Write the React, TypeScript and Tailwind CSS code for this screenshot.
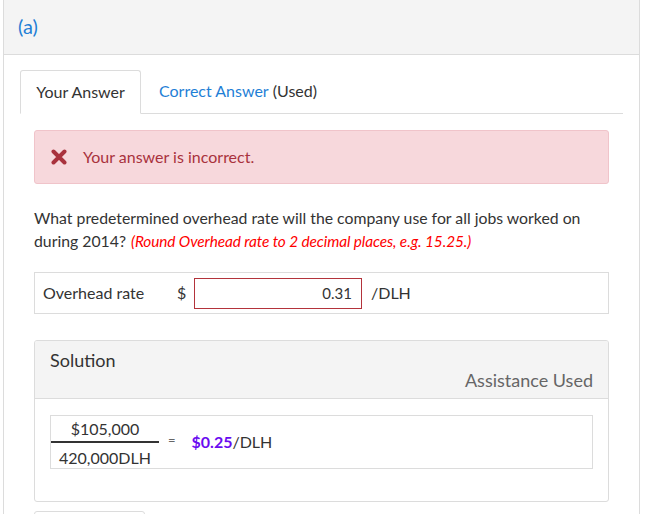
import React from "react";

export default function App() {
  return (
    <div
      className="w-[650px] h-[514px] overflow-hidden bg-white text-[#333]"
      style={{ fontFamily: "Lato, 'Open Sans', sans-serif" }}
    >
      <div className="ml-[3px] w-[637px] h-[514px] border-x border-[#dcdcdc]">
        {/* header */}
        <div className="h-[55px] bg-[#f4f4f4] border-b border-[#dcdcdc] pl-[14px] pt-[11px]">
          <span className="text-[20px] text-[#1f7fd6]">(a)</span>
        </div>

        <div className="px-[16px] pt-[15px]">
          {/* tabs */}
          <div className="flex items-end border-b border-[#dcdcdc] h-[44px]">
            <div className="h-[44px] w-[121px] -mb-px border border-[#dcdcdc] border-b-white rounded-t-[3px] bg-white flex items-center justify-center text-[16px] text-[#333]">
              Your Answer
            </div>
            <div className="h-[44px] flex items-center pl-[18px] text-[16px]">
              <span className="text-[#1f7fd6]">Correct Answer</span>
              <span className="text-[#333]">&nbsp;(Used)</span>
            </div>
          </div>

          <div className="px-[14px]">
            {/* alert */}
            <div className="mt-[16px] h-[54px] bg-[#f7d8dc] border border-[#f0c4ca] rounded-[3px] flex items-center pl-[16px]">
              <svg width="16" height="16" viewBox="0 0 16 16" className="mr-[16px]">
                <path
                  d="M2.5 2.5 L13.5 13.5 M13.5 2.5 L2.5 13.5"
                  stroke="#a9323d"
                  strokeWidth="4"
                  strokeLinecap="round"
                />
              </svg>
              <span className="text-[16px] text-[#a9323d]">Your answer is incorrect.</span>
            </div>

            {/* question */}
            <p className="mt-[22px] text-[15.8px] leading-[23px] text-[#333] w-[575px]">
              What predetermined overhead rate will the company use for all jobs worked on
              during 2014?{" "}
              <i className="text-[#ff0000] text-[15.4px] leading-[23px] tracking-[-0.1px] pl-[1px] pr-[2px]">
                (Round Overhead rate to 2 decimal places, e.g. 15.25.)
              </i>
            </p>

            {/* input row */}
            <div className="mt-[19px] h-[42px] border border-[#dcdcdc] flex items-center pl-[8px]">
              <span className="text-[16px] w-[134px]">Overhead rate</span>
              <span className="text-[16px] w-[17px]">$</span>
              <div className="w-[168px] h-[31px] border border-[#b3333b] flex items-center justify-end pr-[9px] text-[15px] text-[#333]">
                0.31
              </div>
              <span className="ml-[9px] text-[16px]">/DLH</span>
            </div>

            {/* solution */}
            <div className="mt-[26px] h-[162px] border border-[#dcdcdc] rounded-[3px] overflow-hidden">
              <div className="h-[58px] bg-[#f4f4f4] border-b border-[#dcdcdc] px-[15px] pt-[7px]">
                <div className="text-[18px] leading-[24px] text-[#333]">Solution</div>
                <div className="text-right text-[18px] leading-[22px] text-[#666] -mt-[3px]">
                  Assistance Used
                </div>
              </div>
              <div className="px-[15px] pt-[16px]">
                <div className="h-[54px] border border-[#dcdcdc] flex items-start">
                  <div className="flex flex-col items-stretch w-[108px] mt-[3px]">
                    <div className="text-center text-[16px] leading-[20px] pb-[2px]">$105,000</div>
                    <div className="h-[1.5px] bg-[#333]" />
                    <div className="text-center text-[16px] leading-[20px] pt-[5px]">420,000DLH</div>
                  </div>
                  <span className="ml-[9px] mt-[15px] text-[13px] text-[#666]">=</span>
                  <span className="ml-[16px] mt-[14px] text-[16px]">
                    <b className="text-[#6a0bf0]">$0.25</b>/DLH
                  </span>
                </div>
              </div>
            </div>

            <div className="mt-[9px] w-[111px] h-[20px] border border-[#dcdcdc] rounded-[3px]" />
          </div>
        </div>
      </div>
    </div>
  );
}
